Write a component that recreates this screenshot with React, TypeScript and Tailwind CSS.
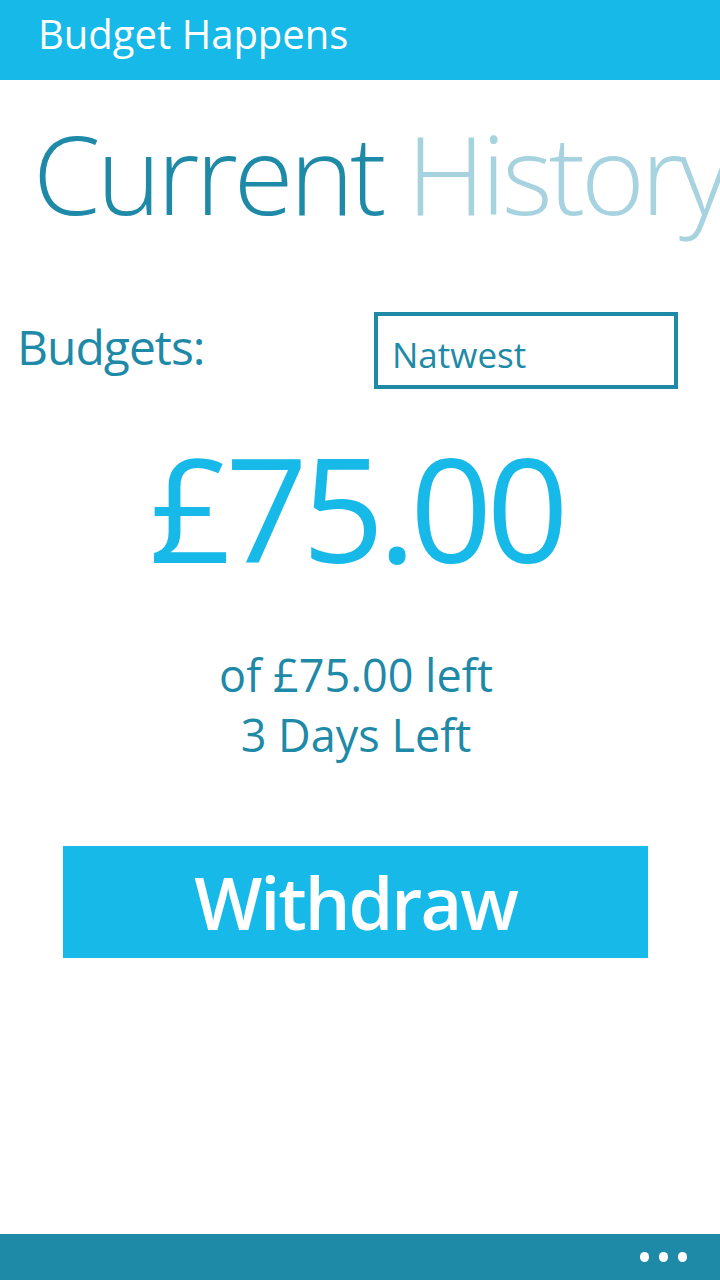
import React from 'react';

// Windows Phone style budget screen
const font = { fontFamily: '"Open Sans", "Noto Sans", sans-serif' };

export default function App() {
  return (
    <div className="flex min-h-[1280px] w-[720px] flex-col overflow-hidden bg-white" style={font}>
      {/* title bar */}
      <header className="h-[80px] shrink-0 bg-[#17b9e8] pl-[38px] pt-[14px]">
        <h1 className="text-[40px] leading-none text-white">Budget Happens</h1>
      </header>

      {/* pivot headers */}
      <nav className="mt-[38px] whitespace-nowrap pl-[33px] text-[109px] font-light leading-none tracking-[-4px]">
        <span className="text-[#1e8aa8]">Current</span>{' '}
        <span className="text-[#a6d3df]">History</span>
      </nav>

      {/* budget selector */}
      <div className="mt-[85px] flex items-start">
        <span className="mt-[11px] w-[374px] pl-[17px] text-[48px] leading-none tracking-[-1px] text-[#1e8aa8]">Budgets:</span>
        <button className="flex h-[77px] w-[304px] items-start border-[4px] border-[#1e8aa8] pl-[14px] pt-[21px] text-left">
          <span className="text-[35px] leading-none text-[#1e8aa8]">Natwest</span>
        </button>
      </div>

      {/* amount left */}
      <div className="mt-[46px] pr-[8px] text-center text-[144px] leading-none tracking-[-6px] text-[#17b9e8]">£75.00</div>

      <div className="mt-[66px] pr-[8px] text-center text-[45px] leading-[60px] text-[#1e8aa8]">
        <p>of £75.00 left</p>
        <p>3 Days Left</p>
      </div>

      <div className="mt-[81px] pl-[63px]">
        <button className="flex h-[112px] w-[585px] items-center justify-center bg-[#17b9e8] text-[72px] font-semibold leading-none tracking-[-2px] text-white">
          Withdraw
        </button>
      </div>

      {/* app bar */}
      <footer className="mt-auto flex h-[46px] shrink-0 items-center justify-end gap-[10px] bg-[#1f8aa7] pr-[33px]">
        <span className="h-[10px] w-[9px] rounded-full bg-white" />
        <span className="h-[10px] w-[9px] rounded-full bg-white" />
        <span className="h-[10px] w-[9px] rounded-full bg-white" />
      </footer>
    </div>
  );
}
